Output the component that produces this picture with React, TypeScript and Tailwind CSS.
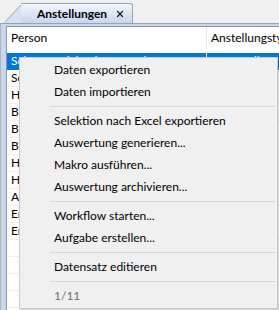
import { X } from "lucide-react";

const rows = [
  { name: "Schäfer, Michael, PMT Sales M", type: "Angestellter" },
  { name: "Schulz, Andrea", type: "Angestellter" },
  { name: "Hoffmann, Peter", type: "Angestellter" },
  { name: "Becker, Julia", type: "Angestellter" },
  { name: "Braun, Thomas", type: "Angestellter" },
  { name: "Bauer, Sandra", type: "Angestellter" },
  { name: "Hartmann, Jens", type: "Angestellter" },
  { name: "Huber, Claudia", type: "Angestellter" },
  { name: "Albrecht, Frank", type: "Angestellter" },
  { name: "Engel, Martina", type: "Angestellter" },
  { name: "Ernst, Stefan", type: "Angestellter" },
];

type MenuEntry = { label: string; disabled?: boolean } | "sep";

const menu: MenuEntry[] = [
  { label: "Daten exportieren" },
  { label: "Daten importieren" },
  "sep",
  { label: "Selektion nach Excel exportieren" },
  { label: "Auswertung generieren..." },
  { label: "Makro ausführen..." },
  { label: "Auswertung archivieren..." },
  "sep",
  { label: "Workflow starten..." },
  { label: "Aufgabe erstellen..." },
  "sep",
  { label: "Datensatz editieren" },
  "sep",
  { label: "1/11", disabled: true },
];

function Tab() {
  return (
    <div className="flex items-end h-[23px] pl-[4px]">
      <svg width="17" height="20" viewBox="0 0 17 20" className="block">
        <polygon points="0,20 17,2 17,20" fill="#d8e1f1" />
        <line x1="0.5" y1="19.5" x2="17" y2="2" stroke="#9aa3b2" strokeWidth="1" />
      </svg>
      <div className="h-[20px] w-[112px] flex items-center border-t border-r border-[#9aa3b2] rounded-tr-[3px] bg-gradient-to-b from-[#f3f6fb] to-[#c8d6ee]">
        <span className="ml-[16px] text-[12px] font-bold text-black leading-none">Anstellungen</span>
        <X className="ml-auto mr-[7px] text-[#1a1a1a]" size={10} strokeWidth={3} />
      </div>
    </div>
  );
}

function ContextMenu() {
  return (
    <div className="absolute left-[19px] top-[57px] w-[259px] bg-[#f0f0f0] border border-[#cccccc] py-[1px] shadow-[2px_2px_2px_rgba(0,0,0,0.18)]">
      {menu.map((m, i) =>
        m === "sep" ? (
          <div key={i} className="h-[7px] flex items-center pl-[30px] pr-[2px]">
            <div className="h-px w-full bg-[#d7d7d7]" />
          </div>
        ) : (
          <div
            key={i}
            className={`h-[22px] flex items-center pl-[34px] text-[12px] ${
              m.disabled ? "text-[#6d6d6d]" : "text-black"
            }`}
          >
            {m.label}
          </div>
        )
      )}
    </div>
  );
}

export default function App() {
  return (
    <div className="relative w-[279px] h-[310px] overflow-hidden bg-[#f0f0f0] font-['Lato',sans-serif]">
      <Tab />
      <div className="h-[287px] border-t border-[#9aa3b2] bg-[#c8d6ee] pt-[2px] pl-[1px] border-l border-l-[#b4b4b4]">
        <div className="h-full bg-white border-l border-t border-[#8c97aa] ml-[4px] flex flex-col overflow-hidden">
          <div className="h-[26px] shrink-0 flex text-[12px] text-black pb-[4px]">
            <div className="w-[200px] shrink-0 pl-[4px] flex items-center border-r border-[#e5e5e5]">Person</div>
            <div className="pl-[4px] flex items-center whitespace-nowrap">Anstellungstyp</div>
          </div>
          {rows.map((r, i) => (
            <div
              key={i}
              className={`h-[17px] shrink-0 flex text-[12px] whitespace-nowrap border-b ${
                i === 0 ? "bg-[#0078d7] text-white border-[#0078d7]" : "text-black border-[#f0f0f0]"
              }`}
            >
              <div className={`w-[200px] shrink-0 pl-[4px] flex items-center overflow-hidden border-r ${i === 0 ? "border-white" : "border-[#f0f0f0]"}`}>
                {r.name}
              </div>
              <div className="pl-[4px] flex items-center">{r.type}</div>
            </div>
          ))}
          {Array.from({ length: 6 }).map((_, i) => (
            <div key={"e" + i} className="h-[17px] shrink-0 border-b border-[#f0f0f0]" />
          ))}
        </div>
      </div>
      <ContextMenu />
    </div>
  );
}
